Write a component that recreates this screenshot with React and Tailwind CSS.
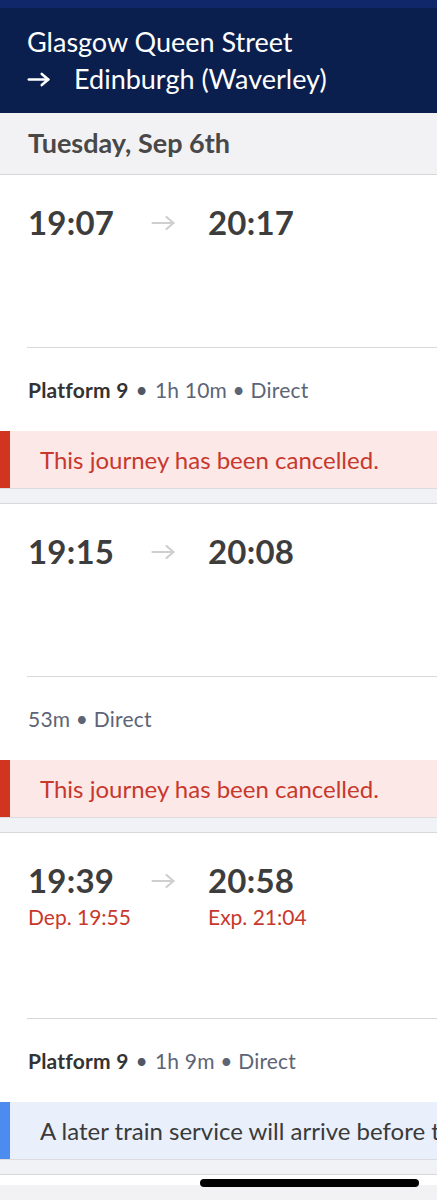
import React from "react";

const journeys = [
  {
    dep: "19:07",
    arr: "20:17",
    platform: "Platform 9",
    meta: "1h 10m • Direct",
    notice: { type: "cancel", text: "This journey has been cancelled." },
  },
  {
    dep: "19:15",
    arr: "20:08",
    platform: null,
    meta: "53m • Direct",
    notice: { type: "cancel", text: "This journey has been cancelled." },
  },
  {
    dep: "19:39",
    arr: "20:58",
    depLate: "Dep. 19:55",
    arrLate: "Exp. 21:04",
    platform: "Platform 9",
    meta: "1h 9m • Direct",
    notice: { type: "info", text: "A later train service will arrive before this one." },
  },
];

const Arrow = ({ className, stroke = 2 }) => (
  <svg viewBox="0 0 26 16" className={className} fill="none" stroke="currentColor" strokeWidth={stroke} strokeLinecap="round" strokeLinejoin="round">
    <path d="M2 8h21" />
    <path d="M16 2l7 6-7 6" />
  </svg>
);

function JourneyCard({ j }) {
  const late = !!j.depLate;
  return (
    <div className="bg-white">
      {/* times */}
      <div className={`pl-[28px] pt-[28px] ${late ? "h-[185px]" : "h-[172px]"}`}>
        <div className="flex items-center h-[40px]">
          <div className="w-[120px] text-[33px] font-bold text-[#3d3d3d] tracking-[0.2px]">{j.dep}</div>
          <Arrow className="w-[27px] h-[16px] text-[#cfcfcf] ml-[2px]" stroke={2.2} />
          <div className="ml-[31px] text-[33px] font-bold text-[#3d3d3d] tracking-[0.2px]">{j.arr}</div>
        </div>
        {late && (
          <div className="flex items-center h-[30px] mt-[1px] text-[21px] text-[#c9372c]">
            <div className="w-[180px]">{j.depLate}</div>
            <div>{j.arrLate}</div>
          </div>
        )}
      </div>
      <div className="ml-[27px] h-px bg-[#d9d9d9]" />
      {/* platform row */}
      <div className="h-[83px] pl-[28px] flex items-center text-[21px] tracking-[0.2px]">
        {j.platform && (
          <>
            <span className="font-bold text-[#333333]">{j.platform}</span>
            <span className="text-[#4f5666] mx-[7px]">•</span>
          </>
        )}
        <span className="text-[#5c6476]">{j.meta}</span>
      </div>
      {/* notice */}
      {j.notice.type === "cancel" ? (
        <div className="flex h-[58px] bg-[#fbe8e7] border-b border-[#dcdcdf]">
          <div className="w-[10px] bg-[#d1341f] shrink-0" />
          <div className="pl-[30px] flex items-center text-[24px] text-[#c8382d] whitespace-nowrap">{j.notice.text}</div>
        </div>
      ) : (
        <div className="flex h-[58px] bg-[#e9f0fc] border-b border-[#dcdcdf] overflow-hidden">
          <div className="w-[10px] bg-[#4d8cef] shrink-0" />
          <div className="pl-[30px] flex items-center text-[24px] text-[#3a3a3a] whitespace-nowrap">{j.notice.text}</div>
        </div>
      )}
      <div className="h-[15px] bg-[#f1f2f5] border-b border-[#d8d8db]" />
    </div>
  );
}

export default function App() {
  return (
    <div className="relative w-[437px] h-[1200px] overflow-hidden bg-[#f2f2f4] font-['Lato',sans-serif]">
      {/* header */}
      <div className="h-[8px] bg-[#10286a]" />
      <div className="h-[105px] bg-[#0a1f4e] pl-[27px] pt-[18px] text-white">
        <div className="text-[27px] leading-[32px]">Glasgow Queen Street</div>
        <div className="flex items-center mt-[5px] text-[27px] leading-[32px]">
          <Arrow className="w-[24px] h-[17px]" stroke={2.8} />
          <span className="ml-[23px]">Edinburgh (Waverley)</span>
        </div>
      </div>
      {/* date */}
      <div className="h-[62px] bg-[#f2f2f4] border-b border-[#d6d6d8] pl-[28px] flex items-center">
        <span className="text-[27px] leading-[32px] font-bold text-[#484848] -mt-[2px]">Tuesday, Sep 6th</span>
      </div>

      {journeys.map((j, i) => (
        <JourneyCard key={i} j={j} />
      ))}

      <div className="h-[10px] bg-white" />

      {/* home indicator */}
      <div className="absolute left-[200px] top-[1179px] w-[219px] h-[8px] rounded-full bg-black" />
    </div>
  );
}
